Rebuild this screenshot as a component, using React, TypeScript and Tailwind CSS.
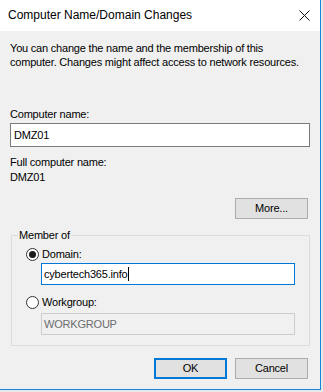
const font = { fontFamily: '"Liberation Sans", Arial, sans-serif' };

const Radio = ({ checked }: { checked: boolean }) => (
    <span className="flex items-center justify-center w-[13px] h-[13px] rounded-full border border-[#333333] bg-white">
        {checked && <span className="w-[7px] h-[7px] rounded-full bg-[#1a1a1a]" />}
    </span>
);

export default function App() {
    return (
        <div className="w-[323px] h-[392px] bg-[#e9e9e9] text-[11px] leading-[15px] tracking-[-0.2px] text-black" style={font}>
            <div className="w-[321px] h-[390px] flex flex-col border-r border-b border-[#1883d7] bg-[#f0f0f0]">
                {/* title bar */}
                <div className="h-[31px] shrink-0 bg-white flex items-center justify-between pl-[8px] pr-[10px]">
                    <span className="text-[12px] tracking-normal">Computer Name/Domain Changes</span>
                    <svg width="11" height="11" viewBox="0 0 11 11">
                        <path d="M0.5 0.5 L10.5 10.5 M10.5 0.5 L0.5 10.5" stroke="#111" strokeWidth="1" />
                    </svg>
                </div>

                <div className="flex flex-col px-[10px] pt-[10px]">
                    <p className="leading-[14px] whitespace-nowrap">
                        You can change the name and the membership of this
                        <br />
                        computer. Changes might affect access to network resources.
                    </p>

                    <label className="mt-[38px]">Computer name:</label>
                    <div className="h-[24px] mt-[1px] border border-[#7a7a7a] bg-white flex items-center px-[3px]">DMZ01</div>

                    <div className="mt-[8px]">Full computer name:</div>
                    <div>DMZ01</div>

                    <div className="flex justify-end mt-[13px] pr-[2px]">
                        <button className="w-[73px] h-[21px] border border-[#adadad] bg-[#e1e1e1]">More...</button>
                    </div>

                    <fieldset className="mt-[9px] ml-[1px] border border-[#dcdcdc] pb-[10px]">
                        <legend className="ml-[6px] px-[1px]">Member of</legend>
                        <div className="flex items-center gap-[3px] mt-[4px] ml-[14px]">
                            <Radio checked />
                            <span>Domain:</span>
                        </div>
                        <div className="h-[22px] ml-[29px] mr-[14px] mt-[1px] border border-[#0078d7] bg-white flex items-center px-[2px]">
                            cybertech365.info
                            <span className="w-[1px] h-[14px] bg-black ml-[1px]" />
                        </div>
                        <div className="flex items-center gap-[3px] mt-[10px] ml-[14px]">
                            <Radio checked={false} />
                            <span>Workgroup:</span>
                        </div>
                        <div className="h-[22px] ml-[29px] mr-[14px] mt-[3px] border border-[#cccccc] bg-[#f0f0f0] flex items-center px-[2px] text-[#6d6d6d]">
                            WORKGROUP
                        </div>
                    </fieldset>

                    <div className="flex justify-end gap-[8px] mt-[12px] pr-[2px]">
                        <button className="w-[73px] h-[21px] border-2 border-[#0078d7] bg-[#e1e1e1]">OK</button>
                        <button className="w-[73px] h-[21px] border border-[#adadad] bg-[#e1e1e1]">Cancel</button>
                    </div>
                </div>
            </div>
        </div>
    );
}
